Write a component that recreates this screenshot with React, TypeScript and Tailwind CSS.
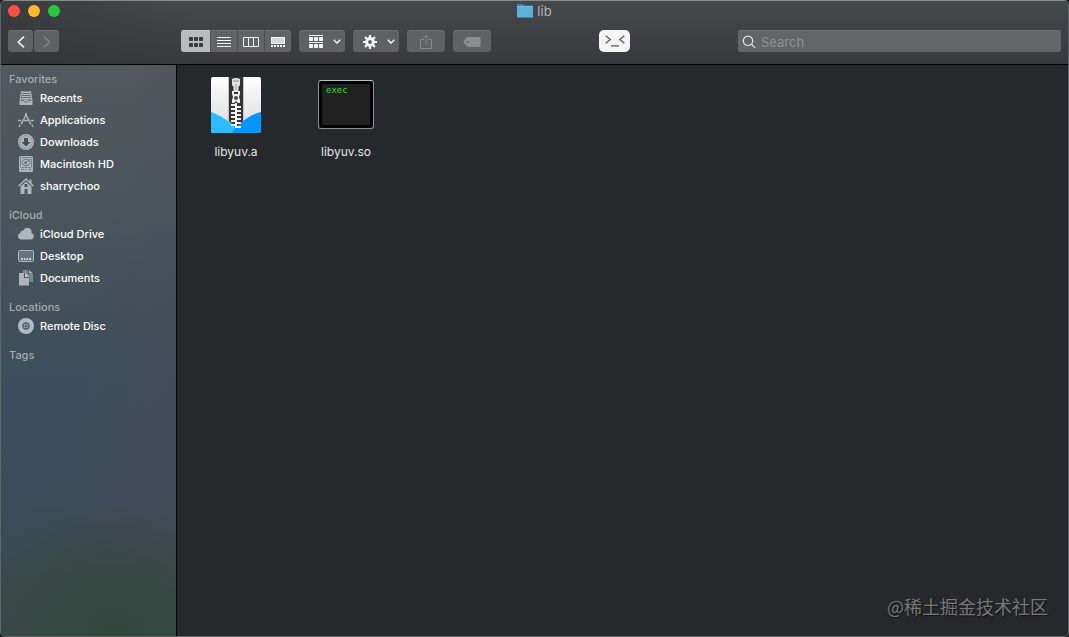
import React, { FC, ReactNode, useState } from "react"

type SidebarItem = {
    name: string;
    icon: ReactNode;
};

type SidebarSection = {
    title: string;
    items: SidebarItem[];
};

type FileItem = {
    name: string;
    icon: ReactNode;
};

const iconClass = "w-4 h-4 shrink-0 text-[#adb6bb]";

const RecentsIcon = () => (
    <svg viewBox="0 0 16 16" className={iconClass} aria-hidden="true">
        <path d="M3 1h10l1.5 10v4h-13V11z" fill="currentColor" />
        <path d="M4 1.500h8l.8 8H3.200z" fill="#5d666b" />
        <path d="M4 2.500h8M4 4.500h8M4 6.500h8M3.500 8.500h9" stroke="#b8c0c4" />
        <path d="M2.500 10.500h2.700l1 1.500h3.600l1-1.500h2.700" stroke="#69737a" fill="none" />
    </svg>
)

const ApplicationsIcon = () => (
    <svg viewBox="0 0 16 16" className={iconClass} aria-hidden="true" fill="none" stroke="currentColor">
        <path d="M8.600 2 3 12.500M7.400 2 13 12.500" strokeWidth="1.5" />
        <path d="M0 8.500h3.500M6 8.500h4M12.500 8.500H16" strokeWidth="1.5" />
        <path d="M8 .8v2.600M2 12.800 1 15M14 12.800 15 15" strokeWidth="1.4" />
    </svg>
)

const DownloadsIcon = () => (
    <svg viewBox="0 0 16 16" className={iconClass} aria-hidden="true">
        <circle cx="8" cy="8" r="8" fill="currentColor" />
        <circle cx="8" cy="8" r="6.3" fill="none" stroke="#7c868b" strokeWidth=".7" />
        <path d="M6 4h4v4h2.500L8 12.500 3.500 8H6z" fill="#454d52" />
    </svg>
)

const DiskIcon = () => (
    <svg viewBox="0 0 16 16" className={iconClass} aria-hidden="true">
        <rect x="1" y="0" width="14" height="16" rx="1.5" fill="currentColor" />
        <rect x="2.5" y="1.5" width="11" height="10" rx="1" fill="none" stroke="#7a858b" />
        <ellipse cx="8" cy="6.5" rx="4" ry="3.2" fill="none" stroke="#6d787e" />
        <circle cx="7.5" cy="6.8" r="1.3" fill="#626d73" />
        <path d="m8 6.500 4.500-3.500" stroke="#626d73" />
        <path d="M3 13.500h1M5 13.500h1M7 13.500h1M11 13.500h2" stroke="#5d676d" />
    </svg>
)

const HomeIcon = () => (
    <svg viewBox="0 0 16 16" className={iconClass} aria-hidden="true">
        <path d="M.5 8.200 8 1l7.500 7.200" fill="none" stroke="currentColor" strokeWidth="1.4" />
        <path d="M11.500 1.500h2v5l-2-2z" fill="currentColor" />
        <path fillRule="evenodd" d="M2.500 8.500 8 3.400l5.500 5.100V16H9.500v-5h-3v5h-4zM6.500 6v3h3V6z" fill="currentColor" />
    </svg>
)

const CloudIcon = () => (
    <svg viewBox="0 0 16 16" className={iconClass} aria-hidden="true">
        <path d="M3.2 13.400a3.200 3.200 0 0 1-.8-6.300 2.400 2.400 0 0 1 3-2.500 4.200 4.200 0 0 1 8 2.500 3.200 3.200 0 0 1-.6 6.300z" fill="currentColor" />
    </svg>
)

const DesktopIcon = () => (
    <svg viewBox="0 0 16 16" className={iconClass} aria-hidden="true">
        <rect x=".5" y="2.5" width="15" height="11" rx="1.2" fill="#66737a" stroke="currentColor" />
        <path d="M3 11h2M6 11h1.500M8.500 11H10M11 11h2" stroke="#cdd4d8" strokeWidth="2" />
    </svg>
)

const DocumentsIcon = () => (
    <svg viewBox="0 0 16 16" className={iconClass} aria-hidden="true">
        <path d="M5 0h5v4h5v8h-3.500V8L6.500 3H5z" fill="#7c888f" />
        <path d="M11 0l4 3.500h-4z" fill="currentColor" />
        <path d="M1 3h5v5h5v7.500H1z" fill="currentColor" />
        <path d="m7 3 4 4H7z" fill="#cbd1d4" />
    </svg>
)

const DiscIcon = () => (
    <svg viewBox="0 0 16 16" className={iconClass} aria-hidden="true">
        <circle cx="8" cy="8" r="8" fill="#abbac5" />
        <circle cx="8" cy="8" r="3" fill="#8d9ca7" stroke="#50606d" strokeWidth="1.4" />
        <circle cx="8" cy="8" r="1.1" fill="#43525f" />
    </svg>
)

const ZipIcon = () => {
    const teeth = [27, 31, 35, 39, 43, 47];

    return (
        <svg viewBox="0 0 50 56" className="w-[50px] h-14" aria-hidden="true">
            <defs>
                <linearGradient id="paper" x1="0" y1="0" x2="0" y2="1">
                    <stop offset="0" stopColor="#ffffff" />
                    <stop offset="1" stopColor="#d8d8d8" />
                </linearGradient>
                <clipPath id="sheet">
                    <rect width="50" height="56" rx="2" />
                </clipPath>
            </defs>
            <g clipPath="url(#sheet)">
                <rect width="50" height="56" fill="url(#paper)" />
                <rect x="17" width="16" height="56" fill="#c4c4c4" />
                <path d="M0 35c8 3 17 8 25 16v5H0z" fill="#2cbcff" />
                <path d="M50 35c-12 3-22 11-29 21h29z" fill="#0496ff" />
                <path d="M18 0h14v44l-7 7-7-7z" fill="#343434" />
                {/* zipper teeth, left and right halves interleaved */}
                {teeth.map((y) => (
                    <g key={y} fill="#f1f1f1">
                        <rect x="20" y={y} width="6" height="2" />
                        <rect x="24" y={y + 2} width="6" height="2" />
                        <rect x="24" y={y - 1} width="2" height="4" />
                    </g>
                ))}
                <path d="M21 14h2v3h4v-3h2v3l-1 3 1 3v3h-2l-2-2-2 2h-2v-3l1-3-1-3z" fill="#ededed" />
                <path d="M21 2q4-2 8 0v6l-1.500 2v5h-5v-5L21 8z" fill="#e2e2e2" />
                <path d="M22 3q3-1 6 0v2h-6z" fill="#b7b7b7" />
                <path d="M24 7h2v6h-2z" fill="#bdbdbd" />
                <circle cx="25" cy="21" r="2" fill="#4a4a4a" />
            </g>
        </svg>
    )
}

const ExecIcon = () => (
    <div className="w-14 h-[49px] rounded-[3px] border border-[#8c9499] border-t-[#b5c5ce] bg-black p-[3px] mb-0.5">
        <div className="h-full bg-[#212121] pl-1 font-['DejaVu_Sans_Mono',monospace] text-[9px] leading-[13px] text-[#3fce56]">exec</div>
    </div>
)

const sections: SidebarSection[] = [
    {
        title: "Favorites",
        items: [
            { name: "Recents", icon: <RecentsIcon /> },
            { name: "Applications", icon: <ApplicationsIcon /> },
            { name: "Downloads", icon: <DownloadsIcon /> },
            { name: "Macintosh HD", icon: <DiskIcon /> },
            { name: "sharrychoo", icon: <HomeIcon /> },
        ],
    },
    {
        title: "iCloud",
        items: [
            { name: "iCloud Drive", icon: <CloudIcon /> },
            { name: "Desktop", icon: <DesktopIcon /> },
            { name: "Documents", icon: <DocumentsIcon /> },
        ],
    },
    { title: "Locations", items: [{ name: "Remote Disc", icon: <DiscIcon /> }] },
    { title: "Tags", items: [] },
];

const files: FileItem[] = [
    { name: "libyuv.a", icon: <ZipIcon /> },
    { name: "libyuv.so", icon: <ExecIcon /> },
];

const views = [
    {
        name: "Icons",
        icon: (
            <svg viewBox="0 0 14 10" className="w-3.5 h-2.5" fill="currentColor" aria-hidden="true">
                <rect width="4" height="4" rx=".7" /><rect x="5" width="4" height="4" rx=".7" /><rect x="10" width="4" height="4" rx=".7" />
                <rect y="6" width="4" height="4" rx=".7" /><rect x="5" y="6" width="4" height="4" rx=".7" /><rect x="10" y="6" width="4" height="4" rx=".7" />
            </svg>
        ),
    },
    {
        name: "List",
        icon: (
            <svg viewBox="0 0 14 10" className="w-3.5 h-2.5" stroke="currentColor" aria-hidden="true">
                <path d="M0 .5h14M0 3.5h14M0 6.5h14M0 9.5h14" />
            </svg>
        ),
    },
    {
        name: "Columns",
        icon: (
            <svg viewBox="0 0 16 10" className="w-4 h-2.5" stroke="currentColor" fill="none" aria-hidden="true">
                <path d="M.5.5h15v9H.5zM5.5.5v9M10.5.5v9" />
            </svg>
        ),
    },
    {
        name: "Gallery",
        icon: (
            <svg viewBox="0 0 14 10" className="w-3.5 h-2.5" aria-hidden="true">
                <rect x=".5" y=".5" width="13" height="6" fill="#d5d7d8" stroke="currentColor" />
                <path d="M0 9h2M3 9h2M6 9h2M9 9h2M12 9h2" stroke="currentColor" strokeWidth="2" />
            </svg>
        ),
    },
];

const Chevron = () => (
    <svg viewBox="0 0 8 5" className="w-2 h-[5px]" fill="none" stroke="currentColor" strokeWidth="1.5" aria-hidden="true">
        <path d="m.7.7 3.3 3.3L7.3.7" />
    </svg>
)

const Toolbar: FC = () => {
    const [view, setView] = useState<string>("Icons");
    const [search, setSearch] = useState<string>("");
    const button = "h-[22px] rounded-[3px] bg-[#5f6264] border-t border-[#6d7072] flex items-center text-[#f3f4f5]";

    return (
        <div className="flex items-start px-[7px] pt-[9px]">
            <div className="flex gap-px w-[173px] shrink-0">
                <button type="button" aria-label="Back" className={`${button} w-[25px] justify-center`}>
                    <svg viewBox="0 0 8 12" className="w-2 h-3" fill="none" stroke="currentColor" strokeWidth="1.6" aria-hidden="true">
                        <path d="M7 .7 1.3 6 7 11.3" />
                    </svg>
                </button>
                <button type="button" aria-label="Forward" className={`${button} w-[25px] justify-center`}>
                    <svg viewBox="0 0 8 12" className="w-2 h-3" fill="none" stroke="#828587" strokeWidth="1.4" aria-hidden="true">
                        <path d="M1 .7 6.7 6 1 11.3" />
                    </svg>
                </button>
            </div>
            <div className="flex gap-2">
                <div className="grid grid-cols-[29px_1fr_1fr_1fr] w-[110px] h-[22px] rounded-[3px] overflow-hidden bg-[#4d5052] gap-px">
                    {views.map((v) => (
                        <button
                            key={v.name}
                            type="button"
                            aria-label={v.name}
                            aria-pressed={view === v.name}
                            onClick={() => setView(v.name)}
                            className={`flex items-center justify-center border-t ${view === v.name ? "bg-[#b9bcbe] border-[#c3c6c8] text-[#393b3d]" : "bg-[#616466] border-[#6d7072] text-[#f3f4f5]"}`}
                        >
                            {v.icon}
                        </button>
                    ))}
                </div>
                <button type="button" aria-label="Group" className={`${button} w-[46px] justify-between pl-2.5 pr-1`}>
                    <svg viewBox="0 0 14 13" className="w-3.5 h-[13px]" fill="currentColor" aria-hidden="true">
                        <path d="M0 0h14v1H0zM0 7h14v1H0z" />
                        <rect y="2" width="4" height="4" rx=".7" /><rect x="5" y="2" width="4" height="4" rx=".7" /><rect x="10" y="2" width="4" height="4" rx=".7" />
                        <rect y="9" width="4" height="4" rx=".7" /><rect x="5" y="9" width="4" height="4" rx=".7" /><rect x="10" y="9" width="4" height="4" rx=".7" />
                    </svg>
                    <Chevron />
                </button>
                <button type="button" aria-label="Action" className={`${button} w-[46px] justify-between pl-2.5 pr-1`}>
                    <svg viewBox="0 0 14 14" className="w-3.5 h-3.5" fill="none" stroke="currentColor" aria-hidden="true">
                        <circle cx="7" cy="7" r="3.4" strokeWidth="3" />
                        <path d="M7 0v3M7 11v3M0 7h3M11 7h3M2.05 2.05 4 4M10 10l1.95 1.95M2.05 11.95 4 10M10 4l1.95-1.95" strokeWidth="2.2" />
                    </svg>
                    <Chevron />
                </button>
                <button type="button" aria-label="Share" className={`${button} w-[38px] justify-center`}>
                    <svg viewBox="0 0 12 16" className="w-3 h-4" fill="none" stroke="#888a8c" aria-hidden="true">
                        <path d="M4 5.5H.5v9h11v-9H8M6 11V1.2M3.2 4 6 1.2 8.8 4" />
                    </svg>
                </button>
                <button type="button" aria-label="Edit Tags" className={`${button} w-[38px] justify-center`}>
                    <svg viewBox="0 0 18 10" className="w-[18px] h-2.5" aria-hidden="true">
                        <path fillRule="evenodd" d="M5.5 0H16a1.5 1.5 0 0 1 1.5 1.5v7A1.5 1.5 0 0 1 16 10H5.5Q4.5 10 3.7 9.2L1 6q-.8-1 0-2L3.7.8Q4.5 0 5.5 0ZM4.8 4a1 1 0 1 0 0 2 1 1 0 0 0 0-2Z" fill="#8b8d8f" />
                    </svg>
                </button>
            </div>
            <div className="flex-1 flex justify-center">
                <button type="button" aria-label="Open in terminal" className="w-[31px] h-[22px] rounded-[5px] bg-[#f4f4f4] flex items-center justify-center">
                    <svg viewBox="0 0 20 12" className="w-5 h-3" fill="none" stroke="#5c5c5c" strokeWidth="1.3" aria-hidden="true">
                        <path d="m.7.8 4.6 3.7L.7 8.2M19.3.8l-4.6 3.7 4.6 3.7M6 10.900h8" />
                    </svg>
                </button>
            </div>
            <label className="w-[323px] h-[22px] rounded-[3px] bg-[#636568] border-t border-[#737577] flex items-center gap-1 pl-1">
                <svg viewBox="0 0 14 14" className="w-3.5 h-3.5 shrink-0" fill="none" stroke="#e3e4e5" strokeWidth="1.2" aria-hidden="true">
                    <circle cx="6" cy="5.8" r="4.7" />
                    <path d="m9.4 9.2 3.6 3.7" />
                </svg>
                <input
                    type="text"
                    aria-label="Search"
                    placeholder="Search"
                    value={search}
                    onChange={(e) => setSearch(e.target.value)}
                    className="flex-1 min-w-0 h-5 bg-transparent outline-none text-[13px] leading-5 text-white placeholder:text-[#8f9193] pl-px"
                />
            </label>
        </div>
    )
}

const Sidebar: FC = () => (
    <nav className="w-44 shrink-0 border-r border-black pt-1.5 bg-[radial-gradient(ellipse_150px_130px_at_65%_100%,#33473f_0%,#364842_45%,transparent_100%),linear-gradient(100deg,transparent_50%,#50485566_100%),linear-gradient(176deg,#53585d_0%,#4c565c_22%,#435159_38%,#3c4e5d_55%,#3b4c5b_75%,#3a4945_100%)]">
        {sections.map((section) => (
            <div key={section.title} className="mb-2.5">
                <h2 className="h-4 pl-2 text-[11px] leading-4 font-medium text-[#a4abae]">{section.title}</h2>
                <ul>
                    {section.items.map((item) => (
                        <li key={item.name}>
                            <a href="#" className="flex items-center gap-1.5 h-[22px] pl-[17px] text-[11px] leading-4 font-medium text-white">
                                {item.icon}
                                {item.name}
                            </a>
                        </li>
                    ))}
                </ul>
            </div>
        ))}
    </nav>
)

const App: FC = () => {
    return (
        <div className="h-screen bg-[#16181a] font-['Inter',sans-serif]">
            <div className="relative h-full flex flex-col overflow-hidden rounded-[5px] border border-[#5d666b] border-t-[#858b8c] border-b-[#5a5f60] bg-[#26292c]">
                <header className="h-16 shrink-0 border-b border-black bg-[linear-gradient(90deg,#30313280_0%,transparent_18%),linear-gradient(180deg,#45494b,#38393c)]">
                    <div className="grid grid-cols-[1fr_auto_1fr] items-center h-5 px-[7px]">
                        <div className="flex gap-2">
                            <button type="button" aria-label="Close" className="w-3 h-3 rounded-full bg-[#ff4f49]" />
                            <button type="button" aria-label="Minimize" className="w-3 h-3 rounded-full bg-[#ffb92e]" />
                            <button type="button" aria-label="Zoom" className="w-3 h-3 rounded-full bg-[#27c83f]" />
                        </div>
                        <h1 className="flex items-center gap-1 text-[13px] leading-4 text-[#b5b8ba]">
                            <svg viewBox="0 0 16 14" className="w-4 h-3.5" aria-hidden="true">
                                <path d="M0 0h6l1.5 1.5H16V14H0z" fill="#3586ab" />
                                <path d="M0 3h16v10H0z" fill="#5cb0da" />
                                <path d="M0 2h16v1H0z" fill="#73c3e8" />
                            </svg>
                            lib
                        </h1>
                    </div>
                    <Toolbar />
                </header>
                <div className="flex-1 min-h-0 flex">
                    <Sidebar />
                    <main className="flex-1 flex flex-wrap content-start pl-1 pt-2">
                        {files.map((file) => (
                            <figure key={file.name} className="w-[110px] flex flex-col items-center gap-[7px]">
                                <div className="h-16 flex items-center justify-center">{file.icon}</div>
                                <figcaption className="text-xs leading-4 text-[#e4e5e6]">{file.name}</figcaption>
                            </figure>
                        ))}
                    </main>
                </div>
                <p className="absolute right-5 bottom-4 font-['Noto_Sans_CJK_SC',sans-serif] text-lg leading-7 text-[#77797b] [text-shadow:1px_1px_1px_#111]">@稀土掘金技术社区</p>
            </div>
        </div>
    )
}

export default App
